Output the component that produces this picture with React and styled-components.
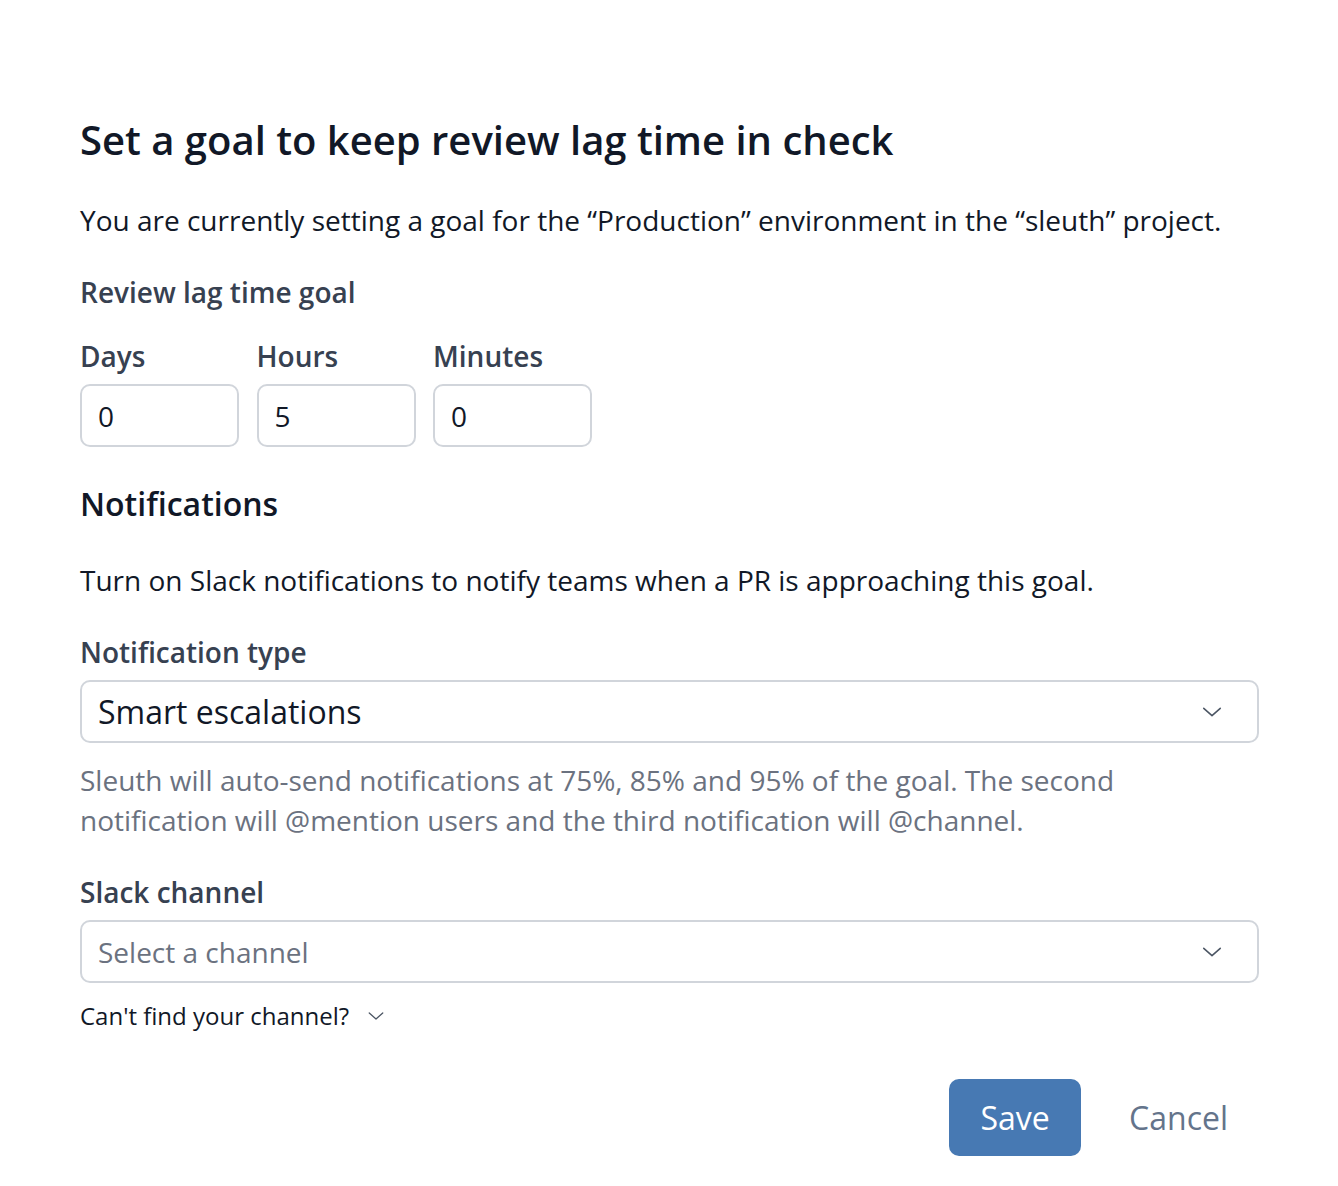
import React from 'react';
import styled, { createGlobalStyle } from 'styled-components';

const GlobalStyle = createGlobalStyle`
  html, body {
    margin: 0;
    padding: 0;
    background: #ffffff;
  }
  body {
    font-family: "Open Sans", "Noto Sans", sans-serif;
    color: #111827;
  }
`;

const Chevron = ({ size = 22 }) => (
  <svg width={size} height={size} viewBox="0 0 24 24" fill="none" stroke="#4b5563" strokeWidth="1.7" strokeLinecap="round" strokeLinejoin="round">
    <path d="M3 8l9 8 9-8" />
  </svg>
);

const App = () => {
  return (
    <Modal>
      <GlobalStyle />
      <Title>Set a goal to keep review lag time in check</Title>
      <Intro>You are currently setting a goal for the “Production” environment in the “sleuth” project.</Intro>

      <Label>Review lag time goal</Label>
      <TimeRow>
        {[['Days', '0'], ['Hours', '5'], ['Minutes', '0']].map(([name, value]) => (
          <TimeField key={name}>
            <FieldName>{name}</FieldName>
            <NumberBox>{value}</NumberBox>
          </TimeField>
        ))}
      </TimeRow>

      <SectionTitle>Notifications</SectionTitle>
      <Intro $gap={36}>Turn on Slack notifications to notify teams when a PR is approaching this goal.</Intro>

      <Label>Notification type</Label>
      <Select>
        <SelectText>Smart escalations</SelectText>
        <Chevron />
      </Select>
      <Help>
        Sleuth will auto-send notifications at 75%, 85% and 95% of the goal. The second
        <br />
        notification will @mention users and the third notification will @channel.
      </Help>

      <Label>Slack channel</Label>
      <Select>
        <SelectText $placeholder>Select a channel</SelectText>
        <Chevron />
      </Select>
      <Disclosure>
        Can't find your channel?
        <Chevron size={18} />
      </Disclosure>

      <Footer>
        <SaveButton>Save</SaveButton>
        <CancelButton>Cancel</CancelButton>
      </Footer>
    </Modal>
  );
};

export default App;

const Modal = styled.div`
  width: 1338px;
  height: 1186px;
  box-sizing: border-box;
  padding: 112px 79px 0 80px;
  display: flex;
  flex-direction: column;
`;

const Title = styled.h1`
  margin: 0;
  font-size: 40px;
  line-height: 56px;
  font-weight: 600;
  color: #111827;
`;

const Intro = styled.p`
  margin: ${p => p.$gap || 32}px 0 0;
  font-size: 28px;
  line-height: 40px;
  color: #111827;
`;

const Label = styled.div`
  margin-top: 32px;
  font-size: 28px;
  line-height: 40px;
  font-weight: 600;
  color: #374151;
`;

const TimeRow = styled.div`
  display: flex;
  gap: 17.5px;
  margin-top: 24px;
`;

const TimeField = styled.div`
  display: flex;
  flex-direction: column;
  gap: 8px;
`;

const FieldName = styled.div`
  font-size: 28px;
  line-height: 40px;
  font-weight: 600;
  color: #374151;
`;

const NumberBox = styled.div`
  width: 159px;
  height: 63px;
  box-sizing: border-box;
  border: 2px solid #d1d5db;
  border-radius: 10px;
  padding: 0 16px;
  display: flex;
  align-items: center;
  font-size: 28px;
  color: #111827;
`;

const SectionTitle = styled.h2`
  margin: 37px 0 0;
  font-size: 32px;
  line-height: 40px;
  font-weight: 600;
  color: #111827;
`;

const Select = styled.div`
  margin-top: 8px;
  height: 63px;
  box-sizing: border-box;
  border: 2px solid #d1d5db;
  border-radius: 10px;
  padding: 0 34px 0 16px;
  display: flex;
  align-items: center;
  justify-content: space-between;
`;

const SelectText = styled.span`
  font-size: ${p => (p.$placeholder ? '28px' : '32px')};
  color: ${p => (p.$placeholder ? '#6b7280' : '#111827')};
`;

const Help = styled.p`
  margin: 17px 0 0;
  font-size: 28px;
  line-height: 40px;
  color: #6b7280;
`;

const Disclosure = styled.div`
  margin-top: 17px;
  display: flex;
  align-items: center;
  gap: 18px;
  font-size: 24px;
  line-height: 32px;
  color: #111827;
`;

const Footer = styled.div`
  margin-top: 47px;
  display: flex;
  justify-content: flex-end;
  align-items: center;
  gap: 48px;
  padding-right: 31px;
`;

const SaveButton = styled.button`
  width: 132px;
  height: 77px;
  border: none;
  border-radius: 10px;
  background: #4779b3;
  color: #ffffff;
  font-family: inherit;
  font-size: 32px;
`;

const CancelButton = styled.button`
  border: none;
  background: none;
  padding: 0;
  color: #64748b;
  font-family: inherit;
  font-size: 32px;
`;
